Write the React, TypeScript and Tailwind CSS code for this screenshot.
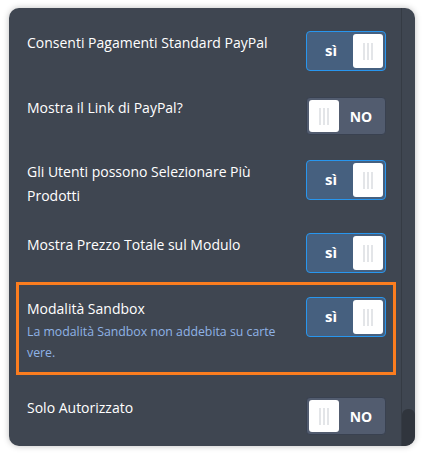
import React from 'react';

type Row = { label: string; on: boolean; desc?: string; highlight?: boolean };

const rows: Row[] = [
  { label: 'Consenti Pagamenti Standard PayPal', on: true },
  { label: 'Mostra il Link di PayPal?', on: false },
  { label: 'Gli Utenti possono Selezionare Più Prodotti', on: true },
  { label: 'Mostra Prezzo Totale sul Modulo', on: true },
  {
    label: 'Modalità Sandbox',
    on: true,
    desc: 'La modalità Sandbox non addebita su carte vere.',
    highlight: true,
  },
  { label: 'Solo Autorizzato', on: false },
];

function Knob() {
  return (
    <div className="w-[30px] h-full bg-white rounded-[3px] flex items-center justify-center gap-[2px]">
      <span className="w-[2px] h-[17px] bg-[#e3e5e8]" />
      <span className="w-[2px] h-[17px] bg-[#e3e5e8]" />
      <span className="w-[2px] h-[17px] bg-[#e3e5e8]" />
    </div>
  );
}

function Toggle({ on }: { on: boolean }) {
  if (on) {
    return (
      <div className="w-20 h-10 shrink-0 rounded-[4px] border border-[#2896ee] bg-[#46607f] flex items-stretch p-[2px]">
        <span className="flex-1 flex items-center justify-center text-white font-bold text-[15px] pb-px">sì</span>
        <Knob />
      </div>
    );
  }
  return (
    <div className="w-20 h-[38px] mt-px shrink-0 rounded-[4px] border border-[#394150] bg-[#525c6f] flex items-stretch p-[2px]">
      <Knob />
      <span className="flex-1 flex items-center justify-center text-white font-bold text-[14px]">NO</span>
    </div>
  );
}

export default function App() {
  return (
    <div className="w-[425px] h-[457px] bg-white pt-2 pl-[9px]" style={{ fontFamily: '"Open Sans", "Noto Sans", sans-serif' }}>
      <div className="w-[406px] h-[438px] bg-[#3f4651] rounded-[10px] shadow-[0_0_6px_rgba(0,0,0,0.25)] flex overflow-hidden">
        <div className="flex-1 flex flex-col pt-[10px] pl-[7px] pr-[5px]">
          {rows.map((r, i) => (
            <div
              key={i}
              className={
                'flex items-start justify-between border-[3px] pl-2 pr-[7px] ' +
                (r.highlight
                  ? 'border-[#fb7d1f] -mt-[3px] mb-2 pt-3 pb-[9px]'
                  : 'border-transparent pt-[10px] pb-[9px]')
              }
            >
              <div className="w-[262px]">
                <div className="text-[14px] leading-6 text-white">{r.label}</div>
                {r.desc && <div className="text-[12.3px] leading-[21px] text-[#8fb3e6]">{r.desc}</div>}
              </div>
              <Toggle on={r.on} />
            </div>
          ))}
        </div>
        <div className="w-[14px] border-l border-[#353b44] flex flex-col justify-end">
          <div className="h-[37px] bg-[#30353d] rounded-t-[6px]" />
        </div>
      </div>
    </div>
  );
}
